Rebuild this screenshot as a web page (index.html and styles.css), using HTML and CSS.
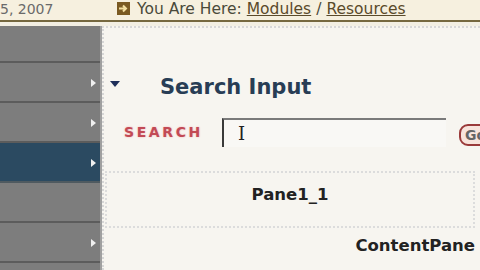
FILE: index.html
```html
<!DOCTYPE html>
<html lang="en">
<head>
  <meta charset="UTF-8">
  <title>Resources</title>
  <link rel="stylesheet" href="styles.css">
</head>
<body>
  <div class="topbar">
    <span class="date">5, 2007</span>
    <span class="crumbs">
      <svg class="crumb-icon" width="13" height="13" viewBox="0 0 13 13">
        <rect width="13" height="13" fill="#7a5a22"/>
        <path d="M2 6.5h6M6 3.5l3 3-3 3" stroke="#f3dfa0" stroke-width="2" fill="none"/>
      </svg>
      You Are Here: <a href="#">Modules</a> / <a href="#">Resources</a>
    </span>
  </div>
  <div class="rule"></div>
  <div class="main">
    <ul class="nav">
      <li></li>
      <li class="has-sub"></li>
      <li class="has-sub"></li>
      <li class="has-sub active"></li>
      <li></li>
      <li class="has-sub"></li>
      <li></li>
    </ul>
    <div class="content">
      <div class="module-head">
        <span class="toggle"></span>
        <h2>Search Input</h2>
      </div>
      <div class="search-row">
        <span class="search-label">SEARCH</span>
        <div class="search-box"><span class="ibeam">I</span></div>
        <span class="go">Go</span>
      </div>
      <div class="pane">Pane1_1</div>
      <div class="content-pane">ContentPane</div>
    </div>
  </div>
</body>
</html>
```

FILE: styles.css
```css
* {
  box-sizing: border-box;
}
body {
  margin: 0;
  font-family: "DejaVu Sans", Verdana, sans-serif;
  background: #f7f5f0;
  height: 270px;
  overflow: hidden;
}
.topbar {
  height: 20px;
  background: #f6f0df;
  display: flex;
  align-items: center;
  font-size: 15.5px;
  line-height: 18px;
  color: #4a4a3a;
  white-space: nowrap;
  padding-bottom: 3px;
}
.date {
  width: 117px;
  color: #6a6a6a;
  font-size: 14px;
}
.crumbs {
  display: flex;
  align-items: center;
}
.crumb-icon {
  margin-right: 7px;
}
.crumbs a {
  color: #5a4a2a;
  text-decoration: underline;
  margin: 0 5px;
}
.rule {
  height: 6px;
  border-top: 2px solid #76683f;
  background: #f3efe3;
}
.main {
  display: flex;
  height: 244px;
  overflow: hidden;
}
.nav {
  list-style: none;
  margin: 0;
  padding: 0;
  width: 102px;
  flex-shrink: 0;
  background: #7d7d7d;
  border-right: 2px solid #a0a0a0;
}
.nav li {
  height: 40px;
  border-bottom: 2px solid #5c5c5c;
  position: relative;
}
.nav li:first-child {
  height: 37px;
}
.nav li.active {
  background: #2b4a61;
  border-bottom-color: #4f5a60;
}
.nav li.has-sub::after {
  content: "";
  position: absolute;
  right: 4px;
  top: 16px;
  border-left: 5px solid #f0f0f0;
  border-top: 4px solid transparent;
  border-bottom: 4px solid transparent;
}
.content {
  flex: 1;
  border-left: 2px dotted #d6d6d6;
  border-top: 2px dotted #d8d8d8;
  padding: 46px 0 0 6px;
}
.module-head {
  display: flex;
  align-items: center;
  height: 26px;
}
.toggle {
  width: 0;
  height: 0;
  border-left: 5px solid transparent;
  border-right: 5px solid transparent;
  border-top: 6px solid #1f2f5a;
  margin-right: 40px;
  margin-top: -6px;
}
.module-head h2 {
  margin: 0;
  font-size: 21px;
  color: #283d55;
}
.search-row {
  display: flex;
  align-items: center;
  margin-top: 17px;
  height: 30px;
}
.search-label {
  margin-left: 14px;
  width: 98px;
  font-size: 14px;
  font-weight: bold;
  letter-spacing: 2.6px;
  color: #c24a55;
  text-shadow: 0 0 2px #f0b0b0;
}
.search-box {
  width: 224px;
  height: 29px;
  border-top: 2px solid #7a7a7a;
  border-left: 2px solid #3a3a3a;
  background: #f9f8f5;
  padding-left: 14px;
  padding-top: 3px;
}
.ibeam {
  font-family: "DejaVu Serif", serif;
  font-size: 18px;
  color: #222;
}
.go {
  margin-left: 13px;
  margin-top: 6px;
  border: 2px solid #9a3a3a;
  border-radius: 9px;
  background: #f8e4dc;
  color: #666;
  font-size: 14px;
  padding: 1px 4px;
  font-weight: bold;
  white-space: nowrap;
}
.pane {
  margin: 24px 0 0 -5px;
  width: 370px;
  height: 57px;
  border: 2px dotted #dcdcdc;
  text-align: center;
  font-size: 16.5px;
  font-weight: bold;
  line-height: 44px;
  color: #222;
}
.content-pane {
  width: 370px;
  margin-left: -5px;
  margin-top: 8px;
  text-align: right;
  font-size: 16.5px;
  font-weight: bold;
  color: #222;
}
```
